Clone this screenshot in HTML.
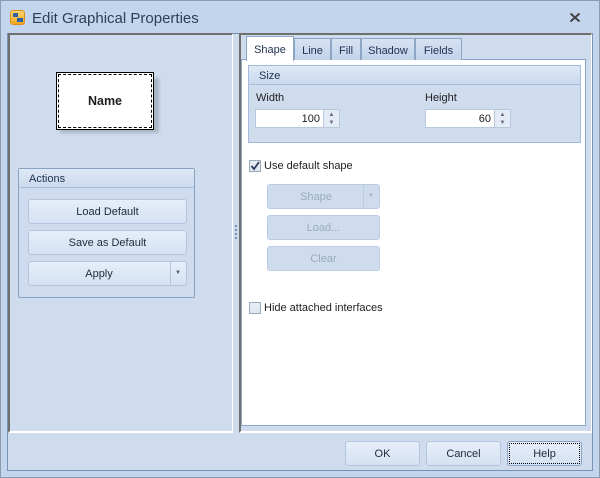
<!DOCTYPE html><html><head><style>
*{box-sizing:border-box;margin:0;padding:0}
body{width:600px;height:478px;overflow:hidden;font-family:"Liberation Sans",sans-serif;font-size:11px;color:#1e1e1e;background:#c3d5ec;position:relative}
.a{position:absolute}
.btn{position:absolute;border:1px solid #b3c6de;border-radius:3px;background:linear-gradient(#e6eef9,#d5e2f3);text-align:center;color:#1e2a3c;font-size:11px}
.dis{color:#9aaabf;background:#cfdcee;border-color:#bccde3}
.sunk{border-top:2px solid #6f6f6f;border-left:2px solid #6f6f6f;border-right:1px solid #fff;border-bottom:2px solid #fff}
.tab{position:absolute;top:38px;height:22px;border:1px solid #8da6c6;border-bottom:none;background:linear-gradient(#d6e2f2,#c2d3ea);text-align:center;line-height:24px;color:#1e3050}
.cb{position:absolute;width:12px;height:12px;border:1px solid #9aa9bb;background:linear-gradient(#e9eef4,#dfe6ee)}
.inp{position:absolute;height:19px;background:#fff;border:1px solid #b9c8da;text-align:right;padding-right:3px;line-height:18px}
.spin{position:absolute;width:17px;height:19px;border:1px solid #b9c8da;background:#e3ebf6;font-size:6px;color:#667;text-align:center;line-height:8px;padding-top:1px}
</style></head><body>
<div class="a" style="left:0;top:0;width:600px;height:478px;border:1px solid #8a9bb0"></div>
<div class="a" style="left:10px;top:10px;width:15px;height:15px;border-radius:3px;background:linear-gradient(#ffd36b,#f5a623);border:1px solid #d8901a"></div>
<div class="a" style="left:13px;top:13px;width:5px;height:4px;background:#2d5fa6"></div>
<div class="a" style="left:17px;top:18px;width:6px;height:4px;background:#2d5fa6"></div>
<div class="a" style="left:32px;top:10px;font-size:15px;color:#2c3e5a">Edit Graphical Properties</div>
<svg class="a" style="left:569px;top:12px" width="12" height="11"><path d="M1.5 1.5L10.5 9.5M10.5 1.5L1.5 9.5" stroke="#444" stroke-width="2"/></svg>
<div class="a" style="left:7px;top:33px;width:586px;height:438px;border:1px solid #7892b4;background:#cfdcee"></div>
<div class="a sunk" style="left:8px;top:33px;width:225px;height:400px;background:#cfdcee"></div>
<div class="a" style="left:60px;top:78px;width:99px;height:55px;background:#8a95a3;opacity:.55;filter:blur(1.5px)"></div>
<div class="a" style="left:56px;top:72px;width:98px;height:58px;background:#fff;border:1px solid #000"></div>
<div class="a" style="left:58px;top:74px;width:94px;height:54px;border:1px dashed #000;text-align:center;line-height:53px;font-weight:bold;font-size:12.5px">Name</div>
<div class="a" style="left:18px;top:168px;width:177px;height:130px;border:1px solid #8aa3c4;border-radius:2px"></div>
<div class="a" style="left:19px;top:169px;width:175px;height:19px;background:linear-gradient(#dfe9f6,#cbdaee);border-bottom:1px solid #a8bdd8;padding-left:10px;line-height:21px;color:#1e3050">Actions</div>
<div class="btn" style="left:28px;top:199px;width:159px;height:25px;line-height:25px">Load Default</div>
<div class="btn" style="left:28px;top:230px;width:159px;height:25px;line-height:25px">Save as Default</div>
<div class="btn" style="left:28px;top:261px;width:159px;height:25px;line-height:25px;padding-right:17px">Apply</div>
<div class="a" style="left:170px;top:262px;width:1px;height:23px;background:#b3c6de"></div>
<div class="a" style="left:175px;top:270px;font-size:6px;color:#556">▼</div>
<div class="a" style="left:235px;top:225px;width:2px;height:14px;border-left:2px dotted #7a90ad"></div>
<div class="a sunk" style="left:239px;top:33px;width:353px;height:400px;background:#cfdcee"></div>
<div class="a" style="left:241px;top:59px;width:345px;height:367px;background:#fff;border:1px solid #8da6c6"></div>
<div class="tab" style="left:294px;width:37px">Line</div>
<div class="tab" style="left:331px;width:30px">Fill</div>
<div class="tab" style="left:361px;width:54px">Shadow</div>
<div class="tab" style="left:415px;width:47px">Fields</div>
<div class="tab" style="left:246px;top:36px;height:25px;width:48px;background:#fff;line-height:27px">Shape</div>
<div class="a" style="left:248px;top:65px;width:333px;height:78px;border:1px solid #a3badb;background:#cfdcee"></div>
<div class="a" style="left:249px;top:66px;width:331px;height:19px;background:linear-gradient(#dfe9f6,#c9d9ef);border-bottom:1px solid #a8bdd8;padding-left:10px;line-height:21px;color:#1e3050">Size</div>
<div class="a" style="left:256px;top:92px">Width</div>
<div class="a" style="left:425px;top:92px">Height</div>
<div class="inp" style="left:255px;top:109px;width:69px">100</div>
<div class="spin" style="left:323px;top:109px">▲<br>▼</div>
<div class="inp" style="left:425px;top:109px;width:70px">60</div>
<div class="spin" style="left:494px;top:109px">▲<br>▼</div>
<div class="cb" style="left:249px;top:160px"><svg width="10" height="10" style="position:absolute;left:0;top:0"><path d="M1.5 5L4 8L9 1" stroke="#2b3c5a" stroke-width="1.8" fill="none"/></svg></div>
<div class="a" style="left:264px;top:160px">Use default shape</div>
<div class="btn dis" style="left:267px;top:184px;width:113px;height:25px;line-height:25px;padding-right:15px">Shape</div>
<div class="a" style="left:363px;top:185px;width:1px;height:23px;background:#bccde3"></div>
<div class="a" style="left:368px;top:193px;font-size:6px;color:#aab">▼</div>
<div class="btn dis" style="left:267px;top:215px;width:113px;height:25px;line-height:25px">Load...</div>
<div class="btn dis" style="left:267px;top:246px;width:113px;height:25px;line-height:25px">Clear</div>
<div class="cb" style="left:249px;top:302px"></div>
<div class="a" style="left:264px;top:302px">Hide attached interfaces</div>
<div class="btn" style="left:345px;top:441px;width:75px;height:25px;line-height:25px">OK</div>
<div class="btn" style="left:426px;top:441px;width:75px;height:25px;line-height:25px">Cancel</div>
<div class="btn" style="left:507px;top:441px;width:75px;height:25px;line-height:21px;border-color:#8ea6c6"><div style="border:1px dotted #000;margin:1px;height:21px">Help</div></div>
</body></html>
